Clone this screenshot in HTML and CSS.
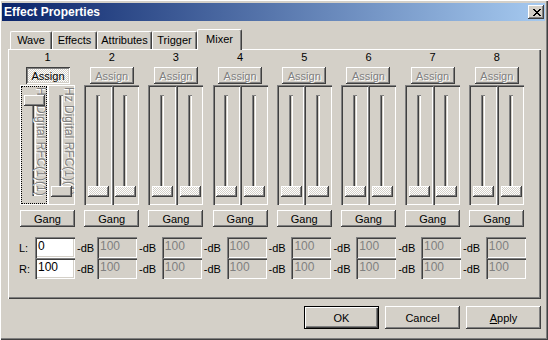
FILE: index.html
```html
<!DOCTYPE html>
<html lang="en">
<head>
    <meta charset="UTF-8">
    <title>Effect Properties</title>
    <link rel="stylesheet" href="styles.css">
</head>
<body>
<div class="window">
    <div class="titlebar">
        <span class="title">Effect Properties</span>
        <button class="close">
            <svg width="8" height="7" viewBox="0 0 8 7" shape-rendering="crispEdges"><path fill="#000" d="M0 0h2v1h-2z M6 0h2v1h-2z M1 1h2v1h-2z M5 1h2v1h-2z M2 2h4v1h-4z M3 3h2v1h-2z M2 4h4v1h-4z M1 5h2v1h-2z M5 5h2v1h-2z M0 6h2v1h-2z M6 6h2v1h-2z"/></svg>
        </button>
    </div>

    <div class="tabs">
        <div class="tab wave">Wave</div>
        <div class="tab effects">Effects</div>
        <div class="tab attributes">Attributes</div>
        <div class="tab trigger">Trigger</div>
        <div class="tab mixer active">Mixer</div>
    </div>

    <div class="panel">
        <div class="channels">
            <div class="channel">
                <div class="num">1</div>
                <button class="btn assign checked">Assign</button>
                <div class="faders">
                    <div class="fader live focus">
                        <div class="track"></div>
                        <div class="tag">Hz Digital RFC(1)(1)</div>
                        <div class="thumb up"></div>
                    </div>
                    <div class="fader live">
                        <div class="track"></div>
                        <div class="tag">Hz Digital RFC(1)(1)</div>
                        <div class="thumb"></div>
                    </div>
                </div>
                <button class="btn gang">Gang</button>
            </div>
            <div class="channel">
                <div class="num">2</div>
                <button class="btn assign" disabled>Assign</button>
                <div class="faders">
                    <div class="fader off"><div class="track"></div><div class="thumb"></div></div>
                    <div class="fader off"><div class="track"></div><div class="thumb"></div></div>
                </div>
                <button class="btn gang">Gang</button>
            </div>
            <div class="channel">
                <div class="num">3</div>
                <button class="btn assign" disabled>Assign</button>
                <div class="faders">
                    <div class="fader off"><div class="track"></div><div class="thumb"></div></div>
                    <div class="fader off"><div class="track"></div><div class="thumb"></div></div>
                </div>
                <button class="btn gang">Gang</button>
            </div>
            <div class="channel">
                <div class="num">4</div>
                <button class="btn assign" disabled>Assign</button>
                <div class="faders">
                    <div class="fader off"><div class="track"></div><div class="thumb"></div></div>
                    <div class="fader off"><div class="track"></div><div class="thumb"></div></div>
                </div>
                <button class="btn gang">Gang</button>
            </div>
            <div class="channel">
                <div class="num">5</div>
                <button class="btn assign" disabled>Assign</button>
                <div class="faders">
                    <div class="fader off"><div class="track"></div><div class="thumb"></div></div>
                    <div class="fader off"><div class="track"></div><div class="thumb"></div></div>
                </div>
                <button class="btn gang">Gang</button>
            </div>
            <div class="channel">
                <div class="num">6</div>
                <button class="btn assign" disabled>Assign</button>
                <div class="faders">
                    <div class="fader off"><div class="track"></div><div class="thumb"></div></div>
                    <div class="fader off"><div class="track"></div><div class="thumb"></div></div>
                </div>
                <button class="btn gang">Gang</button>
            </div>
            <div class="channel">
                <div class="num">7</div>
                <button class="btn assign" disabled>Assign</button>
                <div class="faders">
                    <div class="fader off"><div class="track"></div><div class="thumb"></div></div>
                    <div class="fader off"><div class="track"></div><div class="thumb"></div></div>
                </div>
                <button class="btn gang">Gang</button>
            </div>
            <div class="channel">
                <div class="num">8</div>
                <button class="btn assign" disabled>Assign</button>
                <div class="faders">
                    <div class="fader off"><div class="track"></div><div class="thumb"></div></div>
                    <div class="fader off"><div class="track"></div><div class="thumb"></div></div>
                </div>
                <button class="btn gang">Gang</button>
            </div>
        </div>

        <div class="levels">
            <div class="level-row">
                <span class="side">L:</span>
                <input class="field on" value="0"><span class="unit first">-dB</span>
                <input class="field" value="100" disabled><span class="unit">-dB</span>
                <input class="field" value="100" disabled><span class="unit">-dB</span>
                <input class="field" value="100" disabled><span class="unit">-dB</span>
                <input class="field" value="100" disabled><span class="unit">-dB</span>
                <input class="field" value="100" disabled><span class="unit">-dB</span>
                <input class="field" value="100" disabled><span class="unit">-dB</span>
                <input class="field" value="100" disabled>
            </div>
            <div class="level-row">
                <span class="side">R:</span>
                <input class="field on" value="100"><span class="unit first">-dB</span>
                <input class="field" value="100" disabled><span class="unit">-dB</span>
                <input class="field" value="100" disabled><span class="unit">-dB</span>
                <input class="field" value="100" disabled><span class="unit">-dB</span>
                <input class="field" value="100" disabled><span class="unit">-dB</span>
                <input class="field" value="100" disabled><span class="unit">-dB</span>
                <input class="field" value="100" disabled><span class="unit">-dB</span>
                <input class="field" value="100" disabled>
            </div>
        </div>
    </div>

    <div class="actions">
        <button class="btn default">OK</button>
        <button class="btn">Cancel</button>
        <button class="btn"><u>A</u>pply</button>
    </div>
</div>
</body>
</html>
```

FILE: styles.css
```css
body {
    margin: 0;
    background: #d4d0c8;
    font-family: "Liberation Sans", Arial, sans-serif;
    font-size: 11px;
    color: #000;
}
.window {
    width: 548px;
    height: 340px;
    box-sizing: border-box;
    background: #d4d0c8;
    box-shadow: inset 1px 1px #fff, inset -1px -1px #404040, inset -2px -2px #808080;
    display: flex;
    flex-direction: column;
    overflow: hidden;
}
.titlebar {
    margin: 3px 3px 0 2px;
    height: 18px;
    padding-left: 2px;
    background: linear-gradient(to right, #0a246a, #a6caf0);
    display: flex;
    align-items: center;
    justify-content: space-between;
}
.title {
    color: #fff;
    font-weight: bold;
    font-size: 12px;
    line-height: 18px;
}
.close {
    width: 16px;
    height: 14px;
    margin-right: 1px;
    padding: 0 0 0 1px;
    border: none;
    background: #d4d0c8;
    box-shadow: inset -1px -1px #404040, inset 1px 1px #fff, inset -2px -2px #808080;
    display: flex;
    align-items: center;
    justify-content: center;
}

/* tab strip */
.tabs {
    display: flex;
    align-items: flex-end;
    height: 21px;
    margin: 8px 0 0 10px;
    position: relative;
    z-index: 1;
}
.tab {
    height: 18px;
    margin-bottom: 1px;
    box-sizing: border-box;
    border-top: 1px solid #fff;
    border-left: 1px solid #fff;
    border-right: 1px solid #404040;
    box-shadow: inset -1px 0 #808080;
    border-radius: 2px 2px 0 0;
    background: #d4d0c8;
    text-align: center;
    line-height: 17px;
}
.tab.wave { width: 42px; }
.tab.effects { width: 45px; }
.tab.attributes { width: 55px; }
.tab.trigger { width: 45px; }
.tab.mixer { width: 45px; }
.tab.active {
    height: 21px;
    margin-bottom: 0;
    line-height: 18px;
}

.panel {
    margin: -1px 0 0 8px;
    width: 533px;
    height: 250px;
    box-sizing: border-box;
    padding: 2px 0 0 12px;
    box-shadow: inset 1px 1px #fff, inset -1px -1px #404040, inset -2px -2px #808080;
}

/* channel strips */
.channels {
    display: grid;
    grid-template-columns: repeat(8, 55px);
    column-gap: 9.2px;
}
.channel {
    display: flex;
    flex-direction: column;
    align-items: center;
}
.num {
    height: 13px;
    line-height: 13px;
}

.btn {
    font: inherit;
    color: #000;
    background: #d4d0c8;
    border: none;
    padding: 0;
    box-shadow: inset -1px -1px #404040, inset 1px 1px #fff, inset -2px -2px #808080, inset 2px 2px #d4d0c8;
}
.btn:disabled {
    color: #808080;
    text-shadow: 1px 1px 0 #fff;
}
.btn.checked {
    padding: 1px 0 0 1px;
    background: repeating-conic-gradient(#fff 0% 25%, #d4d0c8 0% 50%) 0 0 / 2px 2px;
    box-shadow: inset 1px 1px #404040, inset -1px -1px #fff, inset 2px 2px #808080, inset -2px -2px #d4d0c8;
}
.btn.default {
    box-shadow: inset 0 0 0 1px #000, inset 2px 2px #fff, inset -2px -2px #404040, inset -3px -3px #808080;
}

.assign {
    width: 44px;
    height: 17px;
    margin-top: 3px;
}
.gang {
    width: 55px;
    height: 17px;
    margin-top: 5px;
}

.faders {
    display: flex;
    width: 55px;
    height: 120px;
    margin-top: 1px;
}
.fader {
    flex: 1;
    position: relative;
    overflow: hidden;
    box-shadow: inset 1px 1px #808080, inset 2px 2px #404040, inset -1px -1px #fff;
}
.fader.live {
    box-shadow: inset 0 0 0 1px #fff;
}
.fader.focus {
    outline: 1px dotted #000;
    outline-offset: -2px;
}
.track {
    position: absolute;
    top: 10px;
    left: 50%;
    margin-left: -2px;
    width: 4px;
    height: 101px;
    box-shadow: inset 1px 1px #808080, inset 2px 0 #404040, inset -1px -1px #fff;
}
.tag {
    position: absolute;
    top: 2px;
    left: 15px;
    writing-mode: vertical-rl;
    font-size: 12px;
    line-height: 11px;
    white-space: nowrap;
    color: #808080;
    text-shadow: 1px 1px 0 #fff;
}
.thumb {
    position: absolute;
    top: 101px;
    left: 50%;
    margin-left: -10px;
    width: 21px;
    height: 11px;
    background: #d4d0c8;
    box-shadow: inset -1px -1px #404040, inset 1px 1px #fff, inset -2px -2px #808080;
}
.thumb.up {
    top: 10px;
}
.fader.off .thumb {
    background: repeating-conic-gradient(#fff 0% 25%, #d4d0c8 0% 50%) 0 0 / 2px 2px;
}

/* level boxes */
.levels {
    margin: 10px 0 0 -3px;
}
.level-row {
    display: flex;
    align-items: center;
    height: 21px;
}
.side {
    width: 18px;
    padding-left: 2px;
    box-sizing: border-box;
}
.field {
    width: 40px;
    height: 21px;
    box-sizing: border-box;
    margin: 0;
    border: none;
    padding: 0 0 4px 3px;
    font: 12px "Liberation Sans", Arial, sans-serif;
    background: #d4d0c8;
    color: #808080;
    outline: none;
    box-shadow: inset 1px 1px #808080, inset 2px 2px #404040, inset -1px -1px #fff, inset -2px -2px #d4d0c8;
}
.field.on {
    background: #fff;
    color: #000;
}
.unit {
    width: 24.8px;
    padding-left: 2px;
    box-sizing: border-box;
}
.unit.first {
    width: 22px;
}

.actions {
    display: flex;
    justify-content: flex-end;
    gap: 6px;
    margin: 7px 7px 0 0;
}
.actions .btn {
    width: 75px;
    height: 23px;
}
```
